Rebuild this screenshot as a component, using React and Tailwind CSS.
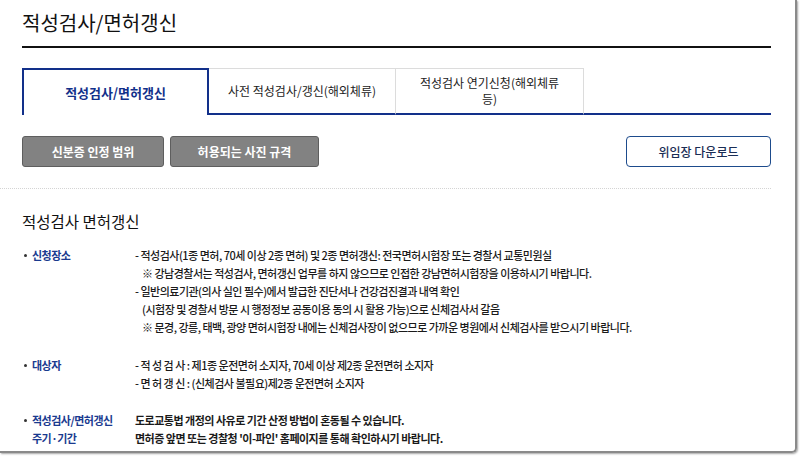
import React from 'react';

const font = "font-['Noto_Sans_CJK_KR','Noto_Sans',sans-serif]";

function Item({ label, children, gap }) {
  return (
    <div className={`flex ${gap}`}>
      <div className="w-[113px] shrink-0 flex items-start pl-[2px]">
        <span className="mt-[8px] mr-[5px] w-[3px] h-[3px] rounded-full bg-[#333] shrink-0"></span>
        <div className="text-[#1a3a8f] font-bold">{label}</div>
      </div>
      <div className="flex-1">{children}</div>
    </div>
  );
}

export default function App() {
  return (
    <div className={`w-[800px] h-[456px] bg-white overflow-hidden ${font}`}>
      <div className="w-[797px] h-[453px] border-r-[2px] border-b-[2px] border-[#8a8a8a] rounded-br-[5px] shadow-[1px_1px_2px_rgba(0,0,0,0.35)] overflow-hidden">
        <div className="pl-[22px] w-[771px]">
          <h1 className="mt-[9px] text-[20px] leading-[28px] text-[#111] font-normal">적성검사/면허갱신</h1>
          <div className="mt-[9px] h-[2px] bg-[#111]"></div>

          <div className="mt-[20px] flex h-[47px]">
            <div className="w-[187px] border-2 border-b-0 border-[#12308a] flex items-center justify-center text-[13px] font-bold text-[#12308a]">
              적성검사/면허갱신
            </div>
            <div className="w-[187px] border-t border-r border-[#dcdcdc] border-b-2 border-b-[#12308a] flex items-center justify-center text-[12px] text-[#222] whitespace-nowrap">
              사전 적성검사/갱신(해외체류)
            </div>
            <div className="w-[188px] border-t border-r border-[#dcdcdc] border-b-2 border-b-[#12308a] flex items-center justify-center px-[22px] text-center text-[12px] leading-[16px] text-[#222]">
              적성검사 연기신청(해외체류 등)
            </div>
            <div className="flex-1 border-b-2 border-[#12308a]"></div>
          </div>

          <div className="mt-[21px] flex justify-between">
            <div className="flex gap-[6px]">
              <button className="w-[142px] h-[31px] bg-[#828282] border border-[#5e5e5e] rounded-[3px] text-white text-[12px] font-bold">
                신분증 인정 범위
              </button>
              <button className="w-[149px] h-[31px] bg-[#828282] border border-[#5e5e5e] rounded-[3px] text-white text-[12px] font-bold">
                허용되는 사진 규격
              </button>
            </div>
            <button className="w-[145px] h-[31px] bg-white border-[1.5px] border-[#1d4b8c] rounded-[4px] text-[#1a2d55] text-[12px] font-medium">
              위임장 다운로드
            </button>
          </div>
        </div>

        <div className="mt-[21px] w-[771px] border-t border-dotted border-[#d4d4d4]"></div>

        <div className="pl-[22px] w-[771px]">
          <h2 className="mt-[20px] text-[15.5px] leading-[24px] text-[#111] font-normal">적성검사 면허갱신</h2>

          <div className="mt-[13px] text-[11px] leading-[18px] tracking-[-0.5px] text-[#1a1a1a] font-medium">
            <Item label="신청장소" gap="">
              <div>- 적성검사(1종 면허, 70세 이상 2종 면허) 및 2종 면허갱신: 전국면허시험장 또는 경찰서 교통민원실</div>
              <div className="pl-[7px]">※ 강남경찰서는 적성검사, 면허갱신 업무를 하지 않으므로 인접한 강남면허시험장을 이용하시기 바랍니다.</div>
              <div>- 일반의료기관(의사 실인 필수)에서 발급한 진단서나 건강검진결과 내역 확인</div>
              <div className="pl-[7px]">(시험장 및 경찰서 방문 시 행정정보 공동이용 동의 시 활용 가능)으로 신체검사서 갈음</div>
              <div className="pl-[7px]">※ 문경, 강릉, 태백, 광양 면허시험장 내에는 신체검사장이 없으므로 가까운 병원에서 신체검사를 받으시기 바랍니다.</div>
            </Item>
            <Item label="대상자" gap="mt-[20px]">
              <div>- 적 성 검 사 : 제1종 운전면허 소지자, 70세 이상 제2종 운전면허 소지자</div>
              <div>- 면 허 갱 신 : (신체검사 불필요)제2종 운전면허 소지자</div>
            </Item>
            <Item
              label={
                <>
                  <div>적성검사/면허갱신</div>
                  <div>주기·기간</div>
                </>
              }
              gap="mt-[19px]"
            >
              <div className="font-bold">도로교통법 개정의 사유로 기간 산정 방법이 혼동될 수 있습니다.</div>
              <div className="font-bold">면허증 앞면 또는 경찰청 '이-파인' 홈페이지를 통해 확인하시기 바랍니다.</div>
            </Item>
          </div>
        </div>
      </div>
    </div>
  );
}
